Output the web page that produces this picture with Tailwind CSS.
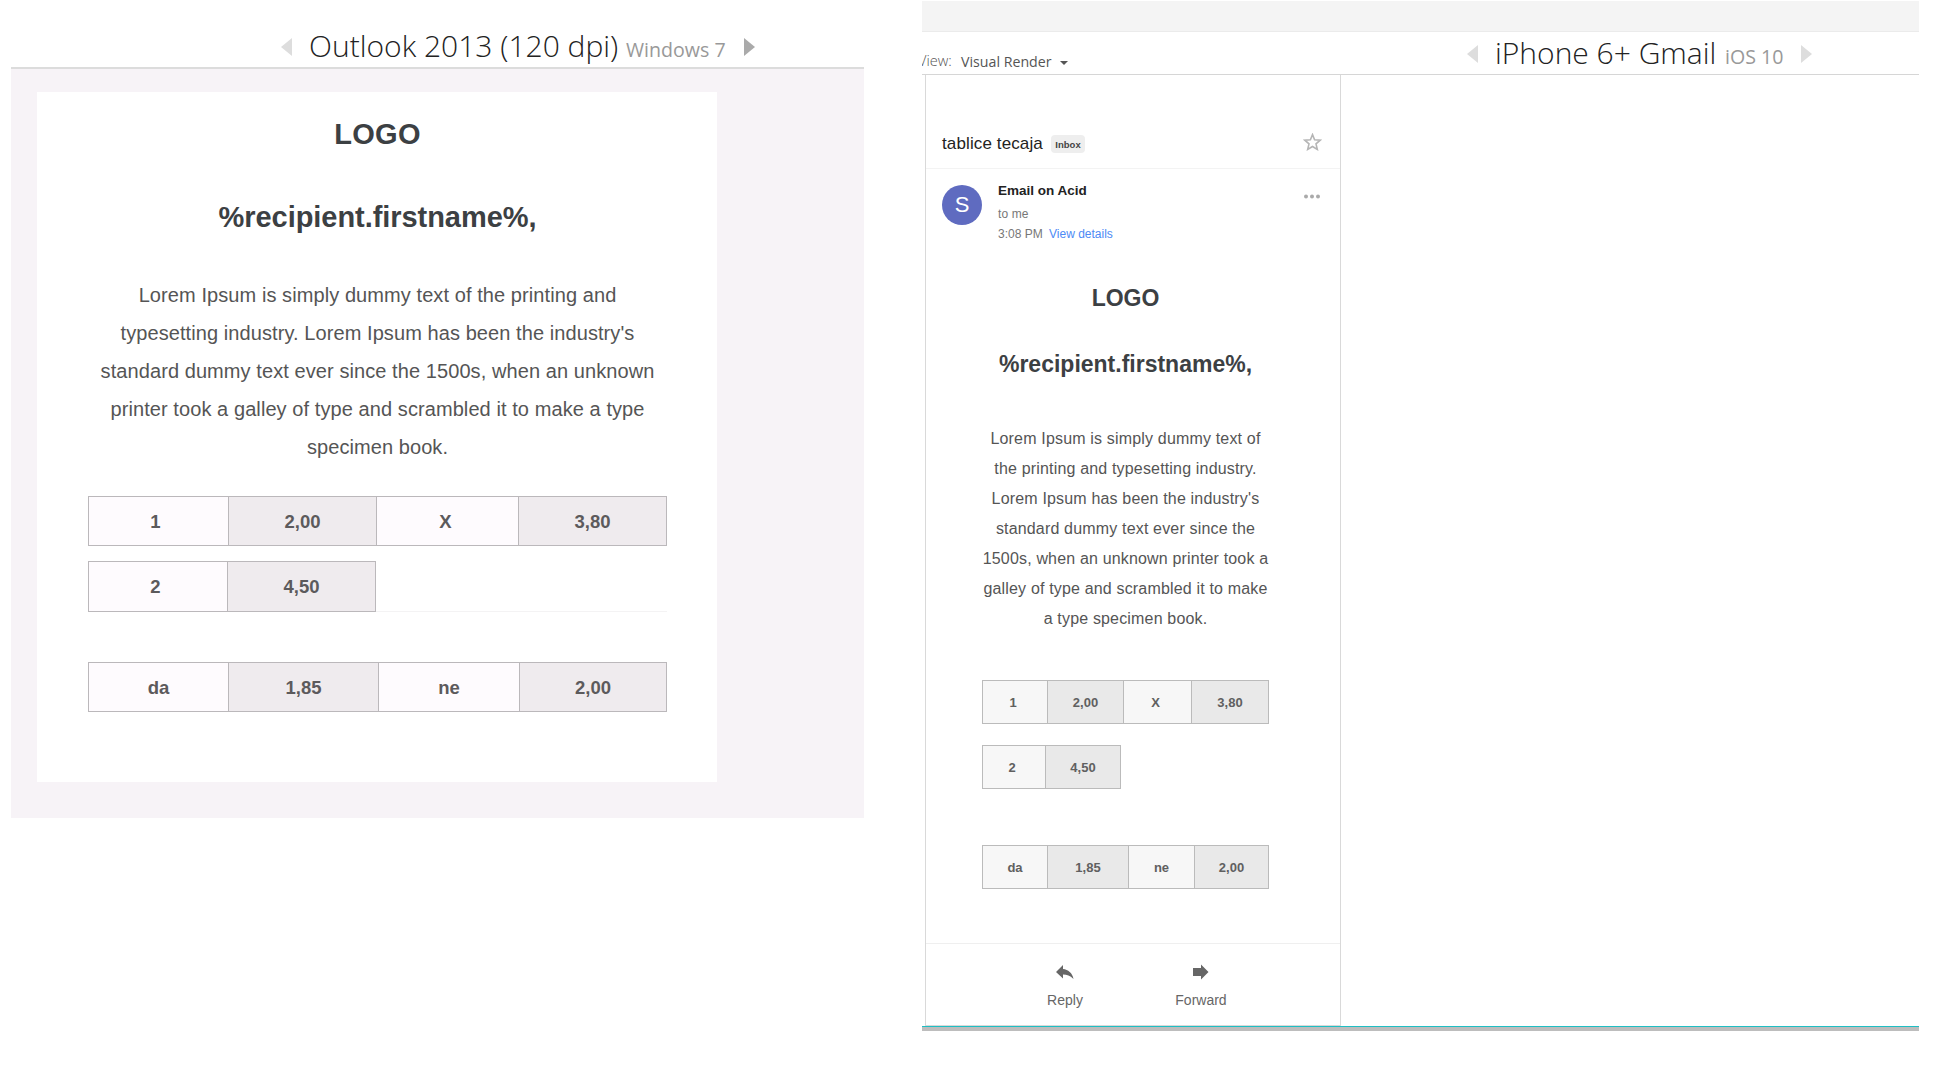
<!DOCTYPE html>
<html lang="en">
<head>
<meta charset="utf-8">
<title>Email client previews</title>
<script src="https://cdn.jsdelivr.net/npm/@tailwindcss/browser@4"></script>
</head>
<body class="bg-white w-[1954px] h-[1073px] overflow-hidden flex items-start font-['Liberation_Sans',Arial,sans-serif]">

<!-- Outlook preview -->
<section class="ml-[11px] w-[853px] shrink-0">
  <header class="h-[69px] border-b-2 border-[#dcdcdc] flex items-start whitespace-nowrap font-['Open_Sans',sans-serif]">
    <svg class="ml-[270px] mt-[38px] w-[11px] h-[18px] shrink-0" viewBox="0 0 11 18"><path d="M11 0v18L0 9z" fill="#ddd"/></svg>
    <h1 class="ml-[17px] mt-[26px] w-[317px] leading-10 text-[30px] font-light text-[#222]">Outlook 2013 (120 dpi)</h1>
    <span class="mt-[30px] w-[118px] leading-10 text-[19.6px] text-[#999]">Windows 7</span>
    <svg class="mt-[38px] w-[11px] h-[18px] shrink-0" viewBox="0 0 11 18"><path d="M0 0v18l11-9z" fill="#aaa"/></svg>
  </header>
  <div class="h-[749px] bg-[#f7f3f7] pl-[26px] pt-[23px]">
    <div class="w-[680px] h-[690px] bg-white pt-6 pl-[51px] pr-[50px] text-center whitespace-nowrap">
      <h2 class="text-[29px] leading-9 font-bold tracking-[0.3px] text-[#3c4043]">LOGO</h2>
      <h2 class="mt-[47px] text-[29px] leading-9 font-bold tracking-[-0.05px] text-[#3c4043]">%recipient.firstname%,</h2>
      <p class="mt-[41px] text-xl leading-[38px] tracking-[0.08px] text-[#555]">Lorem Ipsum is simply dummy text of the printing and<br>typesetting industry. Lorem Ipsum has been the industry's<br>standard dummy text ever since the 1500s, when an unknown<br>printer took a galley of type and scrambled it to make a type<br>specimen book.</p>
      <div class="mt-[30px] h-[50px] flex border border-[#bbb8bb] text-[18.5px] leading-[49px] font-bold text-[#5c5a5c]">
        <div class="w-[139px] pr-[6px] bg-[#fefbfe]">1</div>
        <div class="w-[148px] border-l border-[#bbb8bb] bg-[#efebee]">2,00</div>
        <div class="w-[142px] pr-1 border-l border-[#bbb8bb] bg-[#fefbfe]">X</div>
        <div class="flex-1 border-l border-[#bbb8bb] bg-[#efebee]">3,80</div>
      </div>
      <div class="mt-[15px] h-[51px] flex text-[18.5px] leading-[49px] font-bold text-[#5c5a5c]">
        <div class="w-[139px] pr-[5px] border-l border-y border-[#bbb8bb] bg-[#fefbfe]">2</div>
        <div class="w-[149px] border border-[#bbb8bb] bg-[#efebee]">4,50</div>
        <div class="flex-1 border-b border-[#f4f3f4]"></div>
      </div>
      <div class="mt-[50px] h-[50px] flex border border-[#bbb8bb] text-[18.5px] leading-[49px] font-bold text-[#5c5a5c]">
        <div class="w-[139px] bg-[#fefbfe]">da</div>
        <div class="w-[150px] border-l border-[#bbb8bb] bg-[#efebee]">1,85</div>
        <div class="w-[141px] border-l border-[#bbb8bb] bg-[#fefbfe]">ne</div>
        <div class="flex-1 border-l border-[#bbb8bb] bg-[#efebee]">2,00</div>
      </div>
    </div>
  </div>
</section>

<!-- iPhone Gmail preview -->
<section class="ml-[58px] mt-px w-[997px] shrink-0">
  <div class="h-[31px] bg-[#f4f4f4] border-b border-[#ebebeb]"></div>
  <header class="h-[43px] border-b border-[#d6d6d6] flex items-start overflow-hidden whitespace-nowrap font-['Open_Sans',sans-serif]">
    <span class="-ml-[4px] mt-[18px] w-[43px] leading-5 text-[14.6px] font-light text-[#555]">View:</span>
    <span class="mt-[18px] w-[99px] leading-6 text-[14.2px] text-[#555]">Visual Render</span>
    <svg class="mt-[29px] w-2 h-1 shrink-0" viewBox="0 0 8 4"><path d="M0 0h8L4 4z" fill="#555"/></svg>
    <svg class="ml-[399px] mt-[13px] w-[11px] h-[18px] shrink-0" viewBox="0 0 11 18"><path d="M11 0v18L0 9z" fill="#ddd"/></svg>
    <h1 class="ml-[17px] mt-[1px] w-[230px] leading-10 text-[30px] font-light text-[#222]">iPhone 6+ Gmail</h1>
    <span class="mt-[5px] w-[76px] leading-10 text-[19.6px] text-[#999]">iOS 10</span>
    <svg class="mt-[13px] w-[11px] h-[18px] shrink-0" viewBox="0 0 11 18"><path d="M0 0v18l11-9z" fill="#ddd"/></svg>
  </header>
  <div class="ml-[3px] w-[416px] h-[951px] border-x border-b border-[#d9d9d9] whitespace-nowrap">
    <div class="h-[94px] border-b border-[#f3f3f3] flex items-start pl-4">
      <h2 class="mt-[57px] w-[109px] text-[17px] leading-6 tracking-[0.12px] text-[#222]">tablice tecaja</h2>
      <span class="mt-[60px] w-[34px] h-[18px] rounded-sm bg-[#eee] text-center text-[9.5px] leading-[19px] font-bold text-[#444]">Inbox</span>
      <svg class="ml-[218px] mt-[58px] w-[19px] h-[18px]" viewBox="0 0 19 18"><path d="M9.5 1.6l2.1 5.1 5.6.5-4.2 3.7 1.3 5.5-4.8-2.9-4.8 2.9L6 10.900l-4.200-3.700 5.600-.5z" fill="none" stroke="#b5b5b5" stroke-width="1.600"/></svg>
    </div>
    <div class="flex items-start pl-4 pt-4 h-[106px]">
      <div class="size-10 rounded-full bg-[#5f6bc0] text-white text-center text-[22px] leading-10">S</div>
      <div class="ml-4 w-[306px]">
        <div class="text-[13.5px] leading-5 -mt-1 font-bold text-[#222]">Email on Acid</div>
        <div class="mt-[3px] text-xs leading-5 tracking-[0.1px] text-[#777]">to me</div>
        <div class="text-xs leading-5 text-[#777] flex"><span class="w-[51px]">3:08 PM</span><span class="text-[#4d8af5]">View details</span></div>
      </div>
      <svg class="mt-[9px] w-4 h-[5px]" viewBox="0 0 16 5" fill="#aaa"><circle cx="2" cy="2.500" r="2"/><circle cx="8" cy="2.500" r="2"/><circle cx="14" cy="2.500" r="2"/></svg>
    </div>
    <div class="h-[669px] border-b border-[#efefef] pl-14 pr-[71px] text-center">
      <h2 class="pt-[8px] text-[23px] leading-[30px] font-bold text-[#3c4043]">LOGO</h2>
      <h2 class="mt-[36px] text-[23px] leading-[30px] font-bold text-[#3c4043]">%recipient.firstname%,</h2>
      <p class="mt-[45px] text-base leading-[30px] tracking-[0.17px] text-[#555]">Lorem Ipsum is simply dummy text of<br>the printing and typesetting industry.<br>Lorem Ipsum has been the industry's<br>standard dummy text ever since the<br>1500s, when an unknown printer took a<br>galley of type and scrambled it to make<br>a type specimen book.</p>
      <div class="mt-[46px] h-11 flex border border-[#bbb] text-[13px] leading-[44px] font-bold text-[#606060]">
        <div class="w-[64px] pr-1 bg-[#f7f7f7]">1</div>
        <div class="w-[76px] border-l border-[#bbb] bg-[#e9e9e9]">2,00</div>
        <div class="w-[68px] pr-1 border-l border-[#bbb] bg-[#f7f7f7]">X</div>
        <div class="flex-1 border-l border-[#bbb] bg-[#e9e9e9]">3,80</div>
      </div>
      <div class="mt-[21px] w-[139px] h-11 flex border border-[#bbb] text-[13px] leading-[44px] font-bold text-[#606060]">
        <div class="w-[62px] pr-1 bg-[#f7f7f7]">2</div>
        <div class="flex-1 border-l border-[#bbb] bg-[#e9e9e9]">4,50</div>
      </div>
      <div class="mt-[56px] h-11 flex border border-[#bbb] text-[13px] leading-[44px] font-bold text-[#606060]">
        <div class="w-[64px] bg-[#f7f7f7]">da</div>
        <div class="w-[81px] border-l border-[#bbb] bg-[#e9e9e9]">1,85</div>
        <div class="w-[66px] border-l border-[#bbb] bg-[#f7f7f7]">ne</div>
        <div class="flex-1 border-l border-[#bbb] bg-[#e9e9e9]">2,00</div>
      </div>
    </div>
    <div class="flex pt-[20px] text-sm leading-5 text-[#666]">
      <div class="ml-[109px] w-[60px] flex flex-col items-center">
        <svg class="w-[18px] h-4" viewBox="0 0 18 16"><path d="M0 8l7-7v4c5 .5 9.500 4 10.500 10C14 11.500 11 10.500 7 10.500V14.500z" fill="#666"/></svg>
        <span class="mt-[10px]">Reply</span>
      </div>
      <div class="ml-[76px] w-[60px] flex flex-col items-center">
        <svg class="w-4 h-4" viewBox="0 0 16 16"><path d="M0 4h8V.5L15.500 8 8 15.500V12H0z" fill="#666"/></svg>
        <span class="mt-[10px]">Forward</span>
      </div>
    </div>
  </div>
  <div class="h-[5px] bg-[#bdbdbd] border-t border-[#1fbfc4]"></div>
</section>
</body>
</html>
